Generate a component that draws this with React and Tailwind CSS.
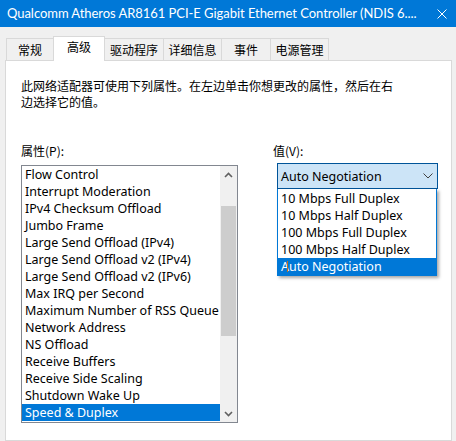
import React from "react";

const items = [
  "Flow Control",
  "Interrupt Moderation",
  "IPv4 Checksum Offload",
  "Jumbo Frame",
  "Large Send Offload (IPv4)",
  "Large Send Offload v2 (IPv4)",
  "Large Send Offload v2 (IPv6)",
  "Max IRQ per Second",
  "Maximum Number of RSS Queue",
  "Network Address",
  "NS Offload",
  "Receive Buffers",
  "Receive Side Scaling",
  "Shutdown Wake Up",
  "Speed & Duplex",
];

const options = [
  "10 Mbps Full Duplex",
  "10 Mbps Half Duplex",
  "100 Mbps Full Duplex",
  "100 Mbps Half Duplex",
  "Auto Negotiation",
];

const tabs = [
  { label: "常规", w: "w-[48px]" },
  { label: "高级", w: "w-[52px]", active: true },
  { label: "驱动程序", w: "w-[60px]" },
  { label: "详细信息", w: "w-[59px]" },
  { label: "事件", w: "w-[50px]" },
  { label: "电源管理", w: "w-[59px]" },
];

export default function App() {
  return (
    <div className="w-[456px] h-[441px] bg-[#f0f0f0] overflow-hidden flex flex-col font-['Noto_Sans','Noto_Sans_CJK_SC',sans-serif] text-black">
      {/* Title bar */}
      <div className="h-[27px] shrink-0 bg-[#0078d7] flex items-center pl-[7px] pr-[5px] text-white">
        <span className="flex-1 whitespace-nowrap text-[13px] tracking-[-0.05px] leading-[27px] font-['Lato',sans-serif]">
          Qualcomm Atheros AR8161 PCI-E Gigabit Ethernet Controller (NDIS 6....
        </span>
        <svg width="10" height="10" viewBox="0 0 10 10" className="mr-[4px]">
          <path d="M0.5 0.5 L9.5 9.5 M9.5 0.5 L0.5 9.5" stroke="white" strokeWidth="1" />
        </svg>
      </div>

      {/* Tabs */}
      <div className="mt-[9px] h-[24px] shrink-0 flex items-end pl-[6px]">
        {tabs.map((t, i) => (
          <div
            key={t.label}
            className={
              t.active
                ? `${t.w} h-[25px] -mb-px relative z-10 bg-white border-l border-t border-r border-[#d9d9d9] ${i ? "-ml-px" : ""} flex justify-center pt-[2px] text-[12px] leading-[16px] font-['Noto_Sans_CJK_SC',sans-serif]`
                : `${t.w} h-[22px] border-l border-t border-r border-[#d9d9d9] ${i ? "-ml-px" : ""} flex justify-center pt-[3px] text-[12px] leading-[16px] font-['Noto_Sans_CJK_SC',sans-serif]`
            }
          >
            {t.label}
          </div>
        ))}
      </div>

      {/* Panel */}
      <div className="ml-[5px] w-[447px] flex-1 border border-[#d9d9d9] bg-white pl-[15px] pt-[17px]">
        <p className="text-[12px] leading-[16px] font-['Noto_Sans_CJK_SC',sans-serif]">
          此网络适配器可使用下列属性。在左边单击你想更改的属性，然后在右
          <br />
          边选择它的值。
        </p>

        <div className="mt-[33px] flex">
          {/* Left column */}
          <div className="w-[217px]">
            <div className="h-[16px] text-[12px] leading-[16px] font-['Noto_Sans_CJK_SC',sans-serif]">属性(P):</div>
            <div className="mt-[6px] w-[217px] h-[258px] border border-[#828790] flex">
              <div className="w-[198px] flex flex-col">
                {items.map((it, i) => (
                  <div
                    key={it}
                    className={
                      i === items.length - 1
                        ? "h-[17px] pl-[3px] text-[12.5px] leading-[17px] whitespace-nowrap overflow-hidden bg-[#0078d7] text-white"
                        : "h-[17px] pl-[3px] text-[12.5px] leading-[17px] whitespace-nowrap overflow-hidden"
                    }
                  >
                    {it}
                  </div>
                ))}
              </div>
              {/* Scrollbar */}
              <div className="w-[17px] bg-[#f0f0f0] flex flex-col">
                <div className="h-[17px] flex items-center justify-center">
                  <svg width="9" height="6" viewBox="0 0 9 6">
                    <path d="M1 5 L4.5 1.5 L8 5" stroke="#606060" strokeWidth="1.6" fill="none" />
                  </svg>
                </div>
                <div className="mt-[23px] h-[130px] w-[15px] ml-px bg-[#cdcdcd]" />
                <div className="flex-1" />
                <div className="h-[17px] flex items-center justify-center">
                  <svg width="9" height="6" viewBox="0 0 9 6">
                    <path d="M1 1 L4.5 4.5 L8 1" stroke="#606060" strokeWidth="1.6" fill="none" />
                  </svg>
                </div>
              </div>
            </div>
          </div>

          {/* Right column */}
          <div className="ml-[35px] relative">
            <div className="h-[16px] text-[12px] leading-[16px] font-['Noto_Sans_CJK_SC',sans-serif]">值(V):</div>
            <div className="mt-[4px] ml-[4px] w-[161px] h-[26px] bg-[#cce4f7] border border-[#005499] flex items-center pl-[3px] pr-[4px]">
              <span className="flex-1 text-[12.5px] leading-[17px]">Auto Negotiation</span>
              <svg width="10" height="6" viewBox="0 0 10 6">
                <path d="M0.5 0.5 L5 5 L9.5 0.5" stroke="#404040" strokeWidth="1" fill="none" />
              </svg>
            </div>
            {/* Dropdown */}
            <div className="absolute left-[4px] top-[46px] w-[160px] border-l border-r border-b border-[#0078d7] bg-white shadow-[2px_2px_3px_rgba(0,0,0,0.35)] z-20 pt-px">
              {options.map((o, i) => (
                <div
                  key={o}
                  className={
                    i === options.length - 1
                      ? "h-[17px] pl-[3px] text-[12.5px] leading-[17px] whitespace-nowrap bg-[#0078d7] text-white relative"
                      : "h-[17px] pl-[3px] text-[12.5px] leading-[17px] whitespace-nowrap"
                  }
                >
                  {o}
                  {i === options.length - 1 && (
                    <span className="absolute left-[9px] top-[3px] w-px h-[11px] bg-[#c07020]" />
                  )}
                </div>
              ))}
            </div>
          </div>
        </div>
      </div>
    </div>
  );
}
